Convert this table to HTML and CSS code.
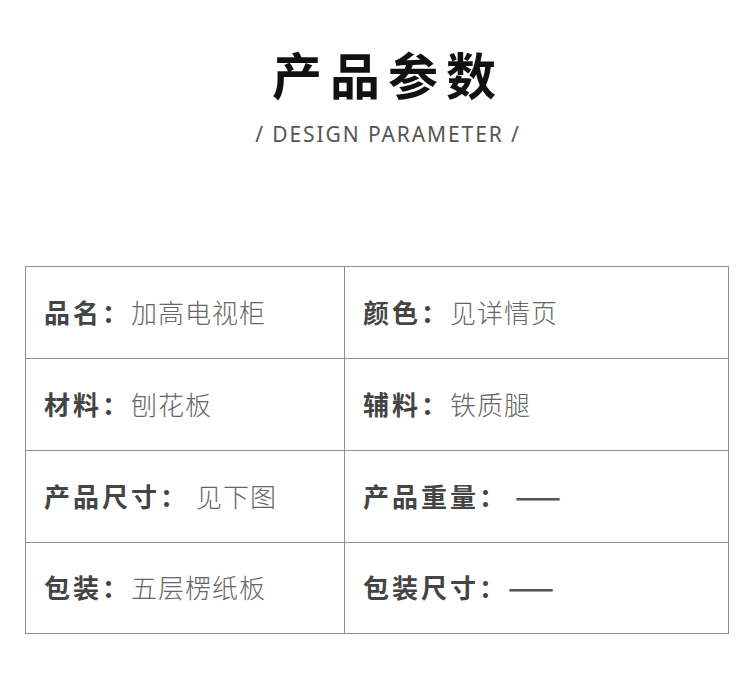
FILE: index.html
```html
<!DOCTYPE html>
<html lang="zh">
<head>
<meta charset="utf-8">
<link rel="stylesheet" href="styles.css">
</head>
<body>
<div class="page">
  <header class="head">
    <h1 class="title">产品参数</h1>
    <p class="sub">/ DESIGN PARAMETER /</p>
  </header>
  <div class="table">
    <div class="cell"><b>品名：</b><span class="v">加高电视柜</span></div>
    <div class="cell"><b>颜色：</b><span class="v">见详情页</span></div>
    <div class="cell"><b>材料：</b><span class="v">刨花板</span></div>
    <div class="cell"><b>辅料：</b><span class="v">铁质腿</span></div>
    <div class="cell"><b>产品尺寸：</b><span class="v v-wide">见下图</span></div>
    <div class="cell"><b>产品重量：</b><span class="v v-dash v-wide">——</span></div>
    <div class="cell"><b>包装：</b><span class="v">五层楞纸板</span></div>
    <div class="cell"><b>包装尺寸：</b><span class="v v-dash">——</span></div>
  </div>
</div>
</body>
</html>
```
FILE: styles.css
```css
* { box-sizing: border-box; }
html, body { margin: 0; padding: 0; background: #fff; }
body { font-family: "Noto Sans CJK SC", "Noto Sans", sans-serif; width: 750px; height: 684px; overflow: hidden; }
.page { padding: 45px 21px 0 25px; }
.head { text-align: center; padding-left: 22px; }
.title {
  margin: 0;
  font-size: 50px;
  line-height: 56px;
  font-weight: 700;
  color: #111;
  letter-spacing: 8px;
}
.sub {
  margin: 20px 0 0;
  font-family: "Noto Sans", sans-serif;
  font-size: 21px;
  line-height: 26px;
  color: #555;
  letter-spacing: 1.9px;
}
.table {
  margin-top: 119px;
  display: grid;
  grid-template-columns: 319px 1fr;
  grid-template-rows: 92px 92px 92px 91px;
  border-top: 1px solid #8f8f8f;
  border-left: 1px solid #8f8f8f;
}
.cell {
  border-right: 1px solid #8f8f8f;
  border-bottom: 1px solid #8f8f8f;
  display: flex;
  align-items: center;
  padding: 0 0 3px 18px;
  font-size: 26px;
}
.cell b { font-weight: 700; color: #444; letter-spacing: 3px; }
.v { color: #666; font-weight: 300; letter-spacing: 1px; }
.v-wide { margin-left: 7px; }
.v-dash { font-size: 27px; letter-spacing: 0; color: #555; font-weight: 700; }
```
